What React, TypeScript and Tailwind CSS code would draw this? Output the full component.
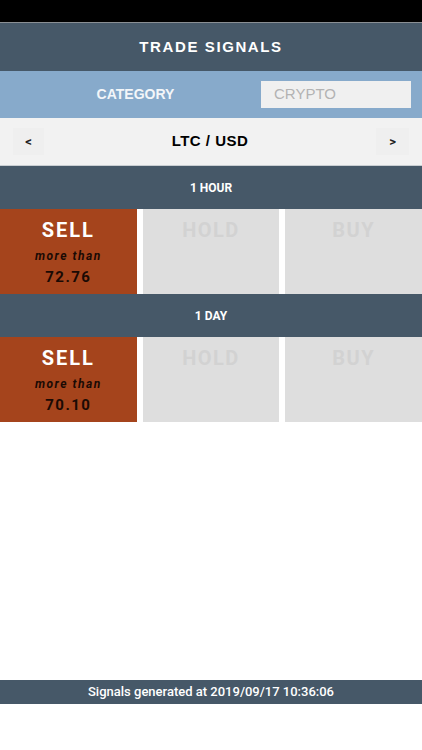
import React from "react";

interface Signal {
  period: string;
  action: "SELL" | "HOLD" | "BUY";
  price: string;
}

const signals: Signal[] = [
  { period: "1 HOUR", action: "SELL", price: "72.76" },
  { period: "1 DAY", action: "SELL", price: "70.10" },
];

const SignalCell: React.FC<{ label: string; active: boolean; price: string }> = ({ label, active, price }) => {
  if (!active) {
    return (
      <div className="bg-[#dedede] flex flex-col items-center pt-[9px]">
        <span className="text-[20px] font-bold tracking-[1.5px] text-[#d2d2d2] leading-[24px]">{label}</span>
      </div>
    );
  }
  return (
    <div className="bg-[#a5441c] flex flex-col items-center pt-[9px]">
      <span className="text-[20px] font-bold tracking-[2px] text-white leading-[24px]">{label}</span>
      <span className="text-[12px] italic font-bold tracking-[1.5px] text-[#1a0a04] leading-[16px] mt-[6px]">more than</span>
      <span className="text-[15px] font-bold tracking-[1.5px] text-[#1a0a04] leading-[20px] mt-[3px]">{price}</span>
    </div>
  );
};

const App: React.FC = () => {
  return (
    <div className="w-[422px] h-[750px] flex flex-col bg-white font-['Roboto',sans-serif]">
      <div className="h-[23px] bg-black border-b border-[#8a8f94] shrink-0" />

      <div className="h-[48px] bg-[#465868] flex items-center justify-center shrink-0">
        <h1 className="text-white text-[15px] font-bold tracking-[1.6px] font-['Liberation_Sans',sans-serif]">TRADE SIGNALS</h1>
      </div>

      <div className="h-[47px] bg-[#87aacb] flex items-center shrink-0">
        <div className="w-[261px] flex justify-center pl-[10px]">
          <span className="text-[#f3f6f9] text-[14px] font-bold font-['Liberation_Sans',sans-serif]">CATEGORY</span>
        </div>
        <div className="w-[150px] h-[27px] bg-[#f0f0f0] flex items-center px-[13px]">
          <span className="text-[#b3b3b3] text-[15px] font-['Liberation_Sans',sans-serif]">CRYPTO</span>
        </div>
      </div>

      <div className="h-[48px] bg-[#f2f2f2] flex items-center justify-between px-[13px] border-b border-[#c9ced2] shrink-0">
        <button className="w-[31px] h-[27px] bg-[#efefef] flex items-center justify-center text-[13px] font-bold text-[#222]">&lt;</button>
        <span className="text-[15px] font-bold tracking-[0.5px] text-black font-['Liberation_Sans',sans-serif]">LTC / USD</span>
        <button className="w-[33px] h-[27px] bg-[#efefef] flex items-center justify-center text-[13px] font-bold text-[#222]">&gt;</button>
      </div>

      {signals.map((s) => (
        <div key={s.period} className="shrink-0">
          <div className="h-[43px] bg-[#465868] flex items-center justify-center">
            <span className="text-white text-[12px] font-bold">{s.period}</span>
          </div>
          <div className="h-[85px] grid grid-cols-3 gap-[6px] bg-white">
            {(["SELL", "HOLD", "BUY"] as const).map((a) => (
              <SignalCell key={a} label={a} active={a === s.action} price={s.price} />
            ))}
          </div>
        </div>
      ))}

      <div className="flex-1" />

      <div className="h-[24px] bg-[#465868] flex items-center justify-center mb-[46px] shrink-0">
        <span className="text-white text-[13px] font-medium">Signals generated at 2019/09/17 10:36:06</span>
      </div>
    </div>
  );
};

export default App;
